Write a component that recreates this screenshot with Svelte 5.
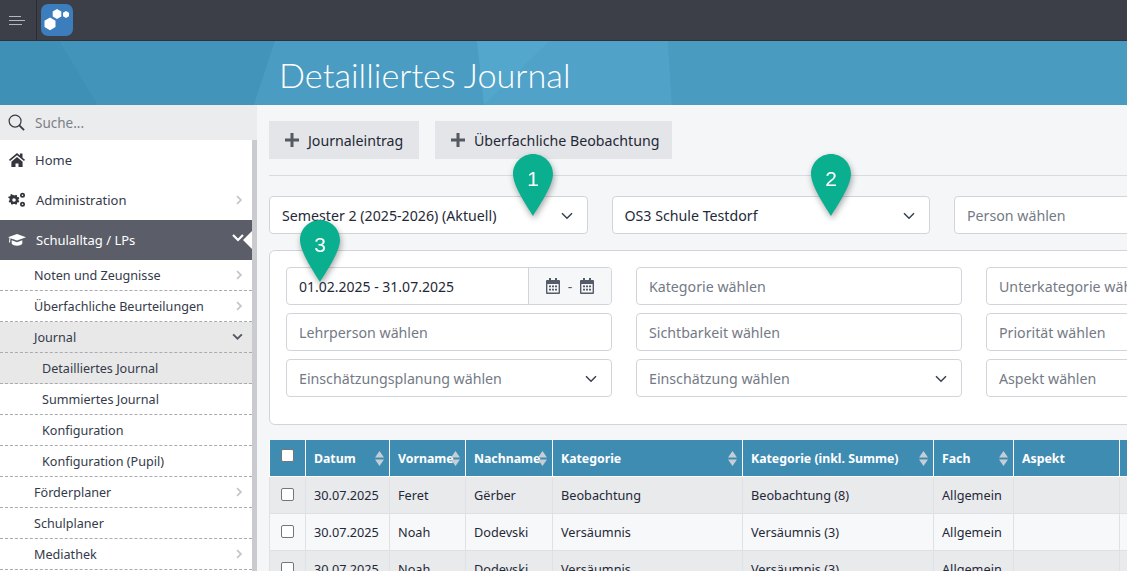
<script>
  const chevronRight = "M3 1.5 L4.5 0 L10 5.5 L4.5 11 L3 9.5 L7 5.5 Z";

  const menu = [
    { label: "Noten und Zeugnisse", arrow: "right" },
    { label: "Überfachliche Beurteilungen", arrow: "right" },
    { label: "Journal", arrow: "down", active: true },
    { label: "Detailliertes Journal", sub: true, active: true },
    { label: "Summiertes Journal", sub: true },
    { label: "Konfiguration", sub: true },
    { label: "Konfiguration (Pupil)", sub: true },
    { label: "Förderplaner", arrow: "right" },
    { label: "Schulplaner" },
    { label: "Mediathek", arrow: "right" },
  ];

  const columns = [
    { label: "Datum", width: 84, sort: true },
    { label: "Vorname", width: 76, sort: true },
    { label: "Nachname", width: 87, sort: true },
    { label: "Kategorie", width: 190, sort: true },
    { label: "Kategorie (inkl. Summe)", width: 191, sort: true },
    { label: "Fach", width: 80, sort: true },
    { label: "Aspekt", width: 106 },
    { label: "", width: 120 },
  ];

  const rows = [
    ["30.07.2025", "Feret", "Gërber", "Beobachtung", "Beobachtung (8)", "Allgemein", "", ""],
    ["30.07.2025", "Noah", "Dodevski", "Versäumnis", "Versäumnis (3)", "Allgemein", "", ""],
    ["30.07.2025", "Noah", "Dodevski", "Versäumnis", "Versäumnis (3)", "Allgemein", "", ""],
  ];

  const filters = [
    [{ label: "Kategorie wählen" }, { label: "Unterkategorie wählen" }],
    [{ label: "Lehrperson wählen" }, { label: "Sichtbarkeit wählen" }, { label: "Priorität wählen" }],
    [{ label: "Einschätzungsplanung wählen", select: true }, { label: "Einschätzung wählen", select: true }, { label: "Aspekt wählen" }],
  ];

  const pins = [
    { n: 1, left: 513, top: 154 },
    { n: 2, left: 811, top: 154 },
    { n: 3, left: 300, top: 220 },
  ];
</script>

{#snippet chevron()}
  <svg class="caret" viewBox="0 0 12 8" width="12" height="8"><path d="M1 1.2 L6 6.2 L11 1.2" fill="none" stroke="#374151" stroke-width="1.5" /></svg>
{/snippet}

{#snippet calendar()}
  <svg viewBox="0 0 14 16" width="14" height="16" fill="#555b68">
    <path d="M3 0h2v2h4V0h2v2h2a1 1 0 0 1 1 1v12a1 1 0 0 1-1 1H1a1 1 0 0 1-1-1V3a1 1 0 0 1 1-1h2zM1.400 6v8.600h11.200V6z" />
    <path d="M3 7.500h2v1.700H3zM6 7.500h2v1.700H6zM9 7.500h2v1.700H9zM3 10.800h2v1.700H3zM6 10.800h2v1.700H6zM9 10.800h2v1.700H9z" />
  </svg>
{/snippet}

{#snippet plus()}
  <svg viewBox="0 0 14 14" width="14" height="14"><path d="M5.500 0h3v5.500H14v3H8.500V14h-3V8.500H0v-3h5.500z" fill="#555962" /></svg>
{/snippet}

<div class="page">
  <header class="topbar">
    <button class="burger" aria-label="Menü">
      <span class="l1"></span><span class="l2"></span><span class="l3"></span>
    </button>
    <div class="logo">
      <svg viewBox="0 0 32 32" width="32" height="32">
        <path d="M9 13.500l5.500 3.200v6.300L9 26.200l-5.500-3.200v-6.300z" fill="#fff" />
        <path d="M16 5l4.300 2.500v5L16 15l-4.300-2.500v-5z" fill="#fff" />
        <path d="M25 7l3 1.800v3.400l-3 1.800-3-1.800V8.800z" fill="#fff" />
      </svg>
    </div>
  </header>

  <section class="hero">
    <svg class="facets" viewBox="0 0 1127 64" preserveAspectRatio="none">
      <polygon points="0,0 60,0 98,64 0,64" fill="#3f90b6" />
      <polygon points="60,0 275,0 254,64 98,64" fill="#4294bb" />
      <polygon points="275,0 477,0 484,64 254,64" fill="#4a9cc2" />
      <polygon points="477,0 550,0 484,64" fill="#54a7cc" />
      <polygon points="550,0 668,0 672,64 484,64" fill="#50a2c8" />
      <polygon points="668,0 1127,0 1127,64 672,64" fill="#4a9bc0" />
    </svg>
    <h1>Detailliertes Journal</h1>
  </section>

  <div class="body">
    <aside class="sidebar">
      <div class="search">
        <svg viewBox="0 0 18 18" width="17" height="17"><circle cx="7.500" cy="7.500" r="6.300" fill="none" stroke="#3a3d44" stroke-width="1.300" /><path d="M12 12l5 5" stroke="#3a3d44" stroke-width="2" /></svg>
        <span>Suche...</span>
      </div>
      <div class="nav-wrap">
        <nav>
          <a class="top home">
            <svg viewBox="0 0 16 14" width="16" height="14"><path d="M8 0L0 6.800l1 1.200L8 2.300 15 8l1-1.200L13.500 4.700V.6h-2.600v1.900zM2.400 8.700V14h4.100v-3.600h3V14h4.100V8.700L8 4z" fill="#33363d" /></svg>
            <span>Home</span>
          </a>
          <a class="top">
            <svg viewBox="0 0 18 16" width="18" height="16" fill="#33363d">
              <path d="M6 3.200l1.100.3.700-.8 1.400.8-.3 1 .8.800 1-.2.600 1.500-.9.600v1.100l.9.600-.6 1.500-1-.2-.8.800.3 1-1.400.8-.7-.8H4.900l-.7.8-1.400-.8.3-1-.8-.8-1 .2-.6-1.500.9-.6V6.400L.2 5.800l.6-1.500 1 .2.800-.8-.3-1 1.400-.8.700.8zm0 3a1.800 1.800 0 1 0 0 3.600 1.800 1.800 0 0 0 0-3.600z" />
              <path fill-rule="evenodd" d="M14.500 0.800a2.500 2.500 0 1 1 0 5 2.500 2.500 0 0 1 0-5zm0 1.700a.8.800 0 1 0 0 1.600.8.800 0 0 0 0-1.600zM14.500 9.800a2.500 2.500 0 1 1 0 5 2.500 2.500 0 0 1 0-5zm0 1.700a.8.800 0 1 0 0 1.600.8.800 0 0 0 0-1.600z" />
            </svg>
            <span>Administration</span>
            <svg class="arrow" viewBox="0 0 11 11" width="9" height="11"><path d={chevronRight} fill="#c3c6ca" /></svg>
          </a>
          <a class="top current">
            <svg viewBox="0 0 18 13" width="18" height="13"><path d="M9 0L18 3.300 9 6.600 2.500 4.200 2 8.500 1 8.500 1.500 3.800 0 3.300zM3.700 6.200L9 8.200l5.300-2v3.600C12.500 12.300 5.500 12.300 3.700 9.800z" fill="#fff" /></svg>
            <span>Schulalltag / LPs</span>
            <svg class="arrow white" viewBox="0 0 12 8" width="12" height="8"><path d="M1 1l5 5 5-5" fill="none" stroke="#fff" stroke-width="2.200" /></svg>
            <i class="notch"></i>
          </a>
          {#each menu as item}
            <a class="item" class:sub={item.sub} class:active={item.active}>
              <span>{item.label}</span>
              {#if item.arrow === "right"}
                <svg class="arrow" viewBox="0 0 11 11" width="9" height="11"><path d={chevronRight} fill="#c3c6ca" /></svg>
              {:else if item.arrow === "down"}
                <svg class="arrow" viewBox="0 0 12 8" width="11" height="7"><path d="M1 1l5 5 5-5" fill="none" stroke="#555962" stroke-width="2.200" /></svg>
              {/if}
            </a>
          {/each}
        </nav>
      </div>
    </aside>

    <main>
      <div class="actions">
        <button class="btn first">{@render plus()}<span>Journaleintrag</span></button>
        <button class="btn">{@render plus()}<span>Überfachliche Beobachtung</span></button>
      </div>
      <hr />

      <div class="selects">
        <div class="field value">Semester 2 (2025-2026) (Aktuell){@render chevron()}</div>
        <div class="field value">OS3 Schule Testdorf{@render chevron()}</div>
        <div class="field">Person wählen</div>
      </div>

      <div class="panel">
        <div class="filter-row">
          <div class="range">
            <span class="range-value">01.02.2025 - 31.07.2025</span>
            <span class="range-icons">{@render calendar()}<em>-</em>{@render calendar()}</span>
          </div>
          {#each filters[0] as f}
            <div class="field wide">{f.label}</div>
          {/each}
        </div>
        {#each filters.slice(1) as row}
          <div class="filter-row">
            {#each row as f}
              <div class="field wide">{f.label}{#if f.select}{@render chevron()}{/if}</div>
            {/each}
          </div>
        {/each}
      </div>

      <table>
        <colgroup>
          <col style="width: 36px" />
          {#each columns as c}
            <col style="width: {c.width}px" />
          {/each}
        </colgroup>
        <thead>
          <tr>
            <th class="check"><span class="box head"></span></th>
            {#each columns as c}
              <th>
                {c.label}
                {#if c.sort}
                  <svg class="sort" viewBox="0 0 9 15" width="9" height="15"><path d="M4.500 0L9 6.500H0zM0 8.500h9L4.500 15z" fill="#c5ced4" /></svg>
                {/if}
              </th>
            {/each}
          </tr>
        </thead>
        <tbody>
          {#each rows as row}
            <tr>
              <td class="check"><span class="box"></span></td>
              {#each row as cell}
                <td>{cell}</td>
              {/each}
            </tr>
          {/each}
        </tbody>
      </table>
    </main>
  </div>

  {#each pins as pin}
    <div class="pin" style="left: {pin.left}px; top: {pin.top}px">
      <svg viewBox="0 0 40 62" width="40" height="62"><path d="M20 0C31 0 40 9 40 20C40 32 26 52 20 62C14 52 0 32 0 20C0 9 9 0 20 0Z" fill="#0aaf8f" /></svg>
      <span>{pin.n}</span>
    </div>
  {/each}
</div>

<style>
  :global(body) {
    margin: 0;
    background: #f5f6f8;
  }

  .page {
    position: relative;
    height: 571px;
    overflow: hidden;
    font-family: "Noto Sans", sans-serif;
    font-size: 14.2px;
    color: #1f2937;
  }

  .topbar {
    display: flex;
    align-items: center;
    height: 40px;
    background: #3c3f48;
    border-bottom: 1px solid #30323a;
  }

  .burger {
    display: flex;
    flex-direction: column;
    gap: 3px;
    width: 37px;
    height: 40px;
    padding: 16px 0 0 9px;
    border: 0;
    border-right: 1px solid #2a2c33;
    background: none;
  }

  .burger span {
    display: block;
    height: 1px;
    background: #b5b7bb;
  }
  .l1 { width: 12px; }
  .l2 { width: 16px; }
  .l3 { width: 13px; }

  .logo {
    width: 32px;
    height: 32px;
    margin-left: 4px;
    border-radius: 7px;
    background: #3b7dbd;
  }

  .logo svg {
    display: block;
  }

  .hero {
    position: relative;
    height: 64px;
    padding-left: 279px;
    background: #4b9dc3;
    overflow: hidden;
  }

  .facets {
    position: absolute;
    inset: 0;
    width: 100%;
    height: 100%;
  }

  h1 {
    position: relative;
    margin: 0;
    font-family: Lato, sans-serif;
    font-size: 34.3px;
    font-weight: 300;
    line-height: 67px;
    color: #fff;
  }

  .body {
    display: flex;
    height: 466px;
  }

  .sidebar {
    flex: 0 0 257px;
    display: flex;
    flex-direction: column;
  }

  .search {
    display: flex;
    align-items: center;
    gap: 10px;
    height: 35px;
    padding-left: 8px;
    background: #ebecee;
    color: #7c7f86;
    font-size: 13.5px;
  }

  .nav-wrap {
    flex: 1;
    background: #c9cbcf;
    padding-right: 5px;
  }

  nav {
    height: 100%;
    background: #fff;
    color: #343a4a;
  }

  nav a {
    display: flex;
    align-items: center;
    position: relative;
  }

  .top {
    height: 40px;
    padding-left: 8px;
    gap: 10px;
    font-size: 13px;
  }

  .top span {
    margin-top: -1px;
  }

  .home span {
    margin-left: -1px;
  }

  .top svg:first-child {
    flex: 0 0 18px;
  }

  .current {
    background: #5b5e69;
    color: #fff;
  }

  .arrow {
    position: absolute;
    right: 9px;
    top: 50%;
    transform: translateY(-50%);
  }

  .arrow.white {
    right: 8px;
    top: 45%;
  }

  .notch {
    position: absolute;
    right: 0;
    top: 50%;
    margin-top: -9px;
    border: 9px solid transparent;
    border-right-color: #fff;
    border-left: 0;
  }

  .item {
    box-sizing: border-box;
    height: 31px;
    padding-left: 34px;
    border-bottom: 1px dashed #a9abaf;
    font-size: 12.6px;
  }

  .item.sub {
    padding-left: 42px;
  }

  .item.active {
    background: #e8e8e8;
  }

  main {
    flex: 1;
    min-width: 0;
    padding: 16px 0 0 12px;
    overflow: hidden;
  }

  .actions {
    display: flex;
    gap: 16px;
  }

  .btn {
    display: flex;
    align-items: center;
    gap: 9px;
    height: 38px;
    padding: 0 0 0 16px;
    border: 0;
    background: #e4e5e8;
    color: #1f2937;
    font: inherit;
    font-size: 14.2px;
  }

  .btn.first {
    width: 150px;
  }

  .btn:not(.first) {
    width: 237px;
  }

  hr {
    width: 900px;
    height: 1px;
    margin: 16px 0 20px;
    border: 0;
    background: #d9dbe0;
  }

  .field {
    position: relative;
    flex: 0 0 326px;
    box-sizing: border-box;
    display: flex;
    align-items: center;
    height: 38px;
    padding-left: 12px;
    border: 1px solid #d1d5db;
    border-radius: 4px;
    background: #fff;
    color: #747a85;
    white-space: nowrap;
  }

  .field.value {
    color: #1f2937;
  }

  .caret {
    position: absolute;
    right: 14px;
    top: 15px;
  }

  .selects {
    display: flex;
    gap: 24px;
    width: 1100px;
  }

  .selects .field {
    flex-basis: 318.5px;
  }

  .panel {
    box-sizing: border-box;
    width: 1100px;
    height: 175px;
    margin-top: 16px;
    padding: 16px;
    border: 1px solid #d1d5db;
    border-radius: 6px;
    background: #fff;
  }

  .filter-row {
    display: flex;
    gap: 24px;
    margin-bottom: 8px;
  }

  .range {
    flex: 0 0 326px;
    box-sizing: border-box;
    display: flex;
    height: 38px;
    border: 1px solid #d1d5db;
    border-radius: 4px;
    overflow: hidden;
    font-size: 14px;
  }

  .range-value {
    flex: 1;
    padding-left: 12px;
    line-height: 38px;
  }

  .range-icons {
    flex: 0 0 82px;
    display: flex;
    align-items: center;
    justify-content: center;
    gap: 8px;
    border-left: 1px solid #d1d5db;
    background: #f6f7f9;
    color: #555b68;
  }

  .range-icons em {
    font-style: normal;
  }

  table {
    width: 971px;
    margin-top: 15px;
    border-collapse: collapse;
    table-layout: fixed;
    font-size: 12.7px;
  }

  th {
    position: relative;
    box-sizing: border-box;
    height: 36px;
    padding: 1px 8px 0;
    border: 1px solid #fff;
    border-top: 0;
    background: #3f8cb3;
    color: #fff;
    text-align: left;
    font-size: 12.3px;
    font-weight: 700;
    white-space: nowrap;
  }

  td {
    box-sizing: border-box;
    height: 37px;
    padding: 0 8px;
    border: 1px solid #dfe1e6;
    white-space: nowrap;
  }

  tbody tr:nth-child(odd) td {
    background: #e9eaec;
  }

  tbody tr:nth-child(even) td {
    background: #f7f8fa;
  }

  .check {
    padding: 0 0 0 11px;
  }

  .box {
    display: block;
    box-sizing: border-box;
    width: 13px;
    height: 13px;
    border: 1px solid #767676;
    border-radius: 2px;
    background: #fff;
  }

  .box.head {
    margin-top: -4px;
  }

  .sort {
    position: absolute;
    right: 5px;
    top: 11px;
  }

  .pin {
    position: absolute;
    width: 40px;
    height: 62px;
    filter: drop-shadow(1px 3px 3px rgba(0, 0, 0, 0.35));
  }

  .pin svg {
    display: block;
  }

  .pin span {
    position: absolute;
    left: 0;
    right: 0;
    top: 12px;
    text-align: center;
    font-family: "Liberation Sans", sans-serif;
    font-size: 21px;
    line-height: 26px;
    color: #fff;
  }
</style>
